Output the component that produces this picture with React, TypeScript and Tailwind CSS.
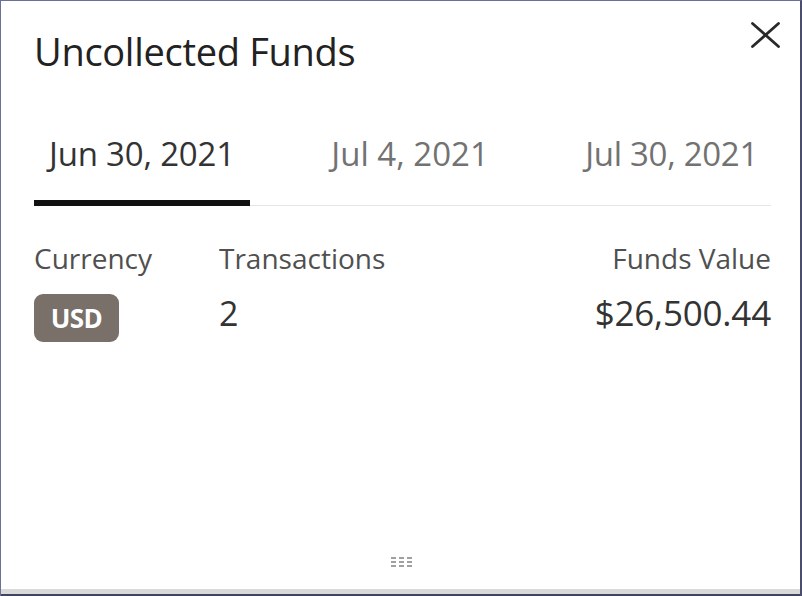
import React from "react";

export default function App() {
  const font = { fontFamily: '"Open Sans", "Noto Sans", sans-serif' };
  return (
    <div
      className="w-[802px] h-[596px] bg-white flex flex-col border-t border-l border-t-[#6b6f9c] border-l-[#6b6f9c] border-r-2 border-r-[#4a4e6c] overflow-hidden"
      style={font}
    >
      <div className="flex flex-col pl-[33px] pr-[29px]">
        <div className="flex items-start justify-between pt-[31px]">
          <h1 className="text-[38px] leading-[38px] text-[#222222] tracking-[-0.3px]">Uncollected Funds</h1>
          <button className="mt-[-11px] mr-[-10px] w-[31px] h-[28px] flex items-center justify-center">
            <svg width="31" height="28" viewBox="0 0 31 28" fill="none" stroke="#2a2a2a" strokeWidth="2.8" strokeLinecap="round">
              <path d="M2.5 2.5 L28.5 25.5 M28.5 2.5 L2.5 25.5" />
            </svg>
          </button>
        </div>

        <div className="mt-[67px] flex justify-between border-b border-[#e6e6e6]">
          <div className="px-[15px] pb-[30px] border-b-[6px] border-[#111] mb-[-1px] text-[33px] leading-[33px] text-[#333] tracking-[-0.2px]">Jun 30, 2021</div>
          <div className="px-[15px] pb-[30px] text-[33px] leading-[33px] text-[#727272] tracking-[0px]">Jul 4, 2021</div>
          <div className="pl-[15px] pr-[13px] pb-[30px] text-[33px] leading-[33px] text-[#727272] tracking-[-0.3px]">Jul 30, 2021</div>
        </div>

        <div className="mt-[38px] grid grid-cols-[185px_1fr_auto] items-start">
          <div className="text-[28px] leading-[28px] text-[#505050]">Currency</div>
          <div className="text-[28px] leading-[28px] text-[#505050]">Transactions</div>
          <div className="text-[28px] leading-[28px] text-[#505050] text-right">Funds Value</div>
          <div className="mt-[22px]">
            <span className="inline-flex items-center justify-center w-[85px] h-[48px] rounded-[9px] bg-[#787069] text-white text-[26px] leading-none font-bold tracking-[-0.5px]">USD</span>
          </div>
          <div className="mt-[24px] text-[34px] leading-[34px] text-[#333]">2</div>
          <div className="mt-[24px] text-[35px] leading-[34px] text-[#333] text-right tracking-[-0.2px]">$26,500.44</div>
        </div>
      </div>

      <div className="flex-1" />
      <div className="flex justify-center pb-[22px] pl-[2px]">
        <div className="flex gap-[3px]">
          {[0, 1, 2].map((c) => (
            <div key={c} className="flex flex-col gap-[2px]">
              {[0, 1, 2].map((r) => (
                <div key={r} className="w-[5px] h-[2px] bg-[#a0a0a0]" />
              ))}
            </div>
          ))}
        </div>
      </div>
      <div className="h-[5px] bg-[#d9d9d9]" />
      <div className="h-[2px] bg-[#3f4460]" />
    </div>
  );
}
